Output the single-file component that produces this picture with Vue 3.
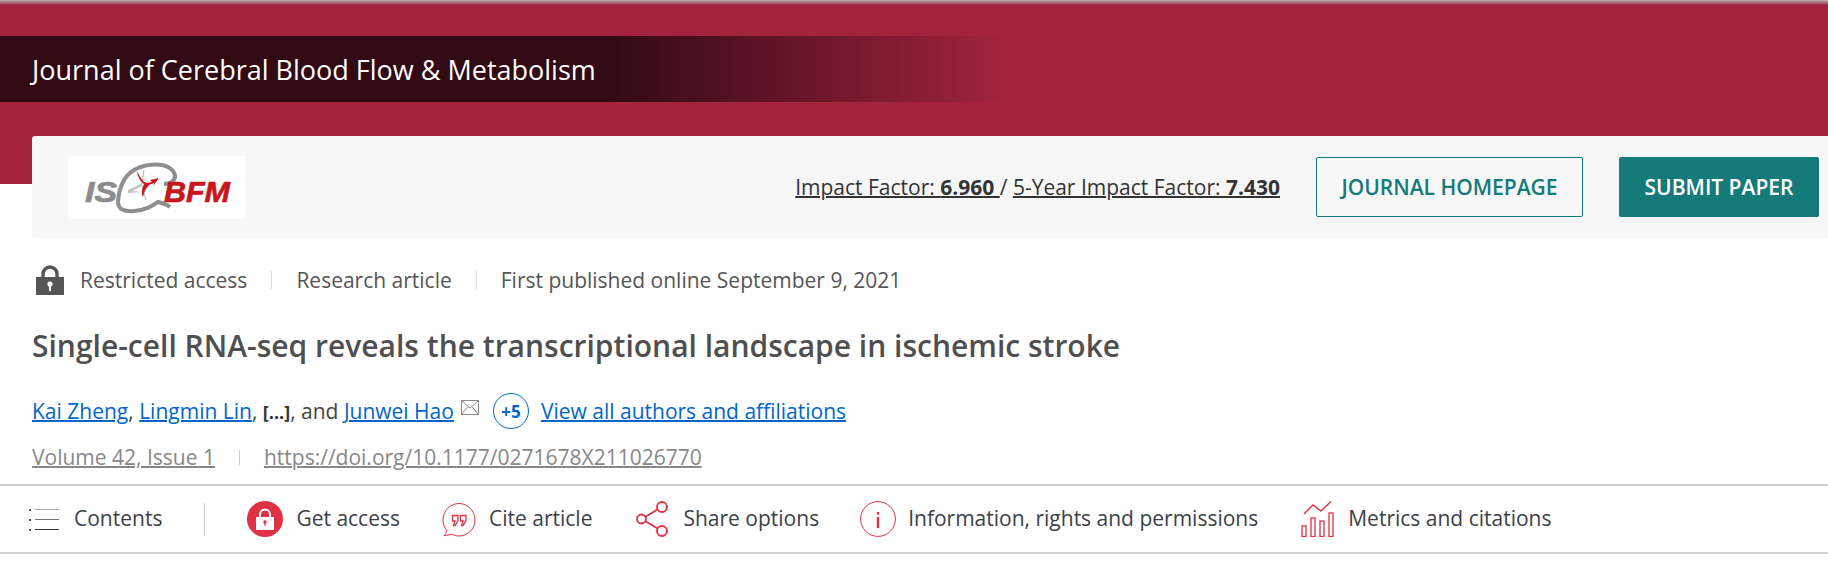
<script setup>
const stats = [
  { label: 'Impact Factor:', value: '6.960 ' },
  { label: '5-Year Impact Factor:', value: '7.430' },
];
</script>

<template>
  <div class="page">
    <header class="masthead">
      <div class="journal-strip">
        <span class="journal-name">Journal of Cerebral Blood Flow &amp; Metabolism</span>
      </div>
      <div class="journal-card">
        <div class="logo">
          <svg width="177" height="63" viewBox="0 0 177 63">
            <text x="17" y="46" textLength="32" lengthAdjust="spacingAndGlyphs" class="logo-text logo-grey">IS</text>
            <path d="M50 46C51 32 56 20 66 14C76 8 92 7 100 11C107 15 109 21 105 25C102 28 99 28 96 28" fill="none" stroke="#8f8f8f" stroke-width="4" />
            <path d="M50 46C50 53 56 56 66 55C78 54 84 50 90 46C94 47 98 48 102 51" fill="none" stroke="#8f8f8f" stroke-width="4" />
            <path d="M60 34L74 27L74 30L64 35L74 36L60 37Z" fill="#c4c4c4" />
            <path d="M76 14L74 28M74 30L78 44" stroke="#b5b5b5" stroke-width="1" fill="none" />
            <path d="M69 15C70 21 72 25 76 28C74 33 73 37 75 41C76 36 78 32 81 29L86 27L85 30L91 22L82 24L84 26C80 27 78 27 76 26C73 23 71 19 69 15Z" fill="#c8161d" />
            <text x="96" y="46" textLength="66" lengthAdjust="spacingAndGlyphs" class="logo-text logo-red">BFM</text>
          </svg>
        </div>
        <div class="impact">
          <template v-for="(s, i) in stats" :key="s.label">
            <span v-if="i > 0">/ </span>
            <span class="impact-link">{{ s.label }} <b>{{ s.value }}</b></span>
          </template>
        </div>
        <a class="btn btn-outline">JOURNAL HOMEPAGE</a>
        <a class="btn btn-solid">SUBMIT PAPER</a>
      </div>
    </header>

    <section class="article">
      <div class="meta">
        <svg class="lock" width="28" height="30" viewBox="0 0 28 30">
          <path d="M7 13V9a7 7 0 0 1 14 0v4" fill="none" stroke="#555" stroke-width="3.4" />
          <rect x="0" y="12" width="28" height="18" fill="#555" />
          <circle cx="14" cy="19" r="2.6" fill="#fff" />
          <rect x="13" y="20" width="2" height="6" fill="#fff" />
        </svg>
        <span>Restricted access</span>
        <i class="meta-sep"></i>
        <span>Research article</span>
        <i class="meta-sep"></i>
        <span>First published online September 9, 2021</span>
      </div>

      <h1 class="title">Single-cell RNA-seq reveals the transcriptional landscape in ischemic stroke</h1>

      <div class="authors">
        <span><a>Kai Zheng</a>, <a>Lingmin Lin</a>, <b class="elided">[...]</b>, and <a>Junwei Hao</a></span>
        <svg class="mail" width="18" height="15" viewBox="0 0 18 15">
          <rect x="0.5" y="0.5" width="17" height="14" fill="none" stroke="#8a8a8a" />
          <path d="M1 1L9 8L17 1M1 14L7 6.5M17 14L11 6.5" fill="none" stroke="#8a8a8a" />
        </svg>
        <span class="more">+5</span>
        <a>View all authors and affiliations</a>
      </div>

      <div class="issue">
        <a>Volume 42, Issue 1</a>
        <i class="issue-sep"></i>
        <a>https://doi.org/10.1177/0271678X211026770</a>
      </div>
    </section>

    <nav class="toolbar">
      <div class="tool tool-contents">
        <svg width="30" height="24" viewBox="0 0 30 24">
          <path d="M0 3h2M0 13h2M0 23h2" stroke="#555" stroke-width="2" />
          <path d="M6 2.500h24" stroke="#aaa" />
          <path d="M6 12.500h24" stroke="#777" />
          <path d="M6 22.500h24" stroke="#333" />
        </svg>
        <span>Contents</span>
      </div>
      <i class="tool-sep"></i>
      <div class="tool">
        <svg width="36" height="36" viewBox="0 0 36 36">
          <circle cx="18" cy="18" r="18" fill="#e03145" />
          <path d="M13 17v-3.500a5 5 0 0 1 10 0V17" fill="none" stroke="#fff" stroke-width="2" />
          <rect x="9" y="16" width="18" height="13" fill="#fff" />
          <circle cx="18" cy="21" r="1.700" fill="#e03145" />
          <rect x="17.400" y="21" width="1.200" height="4" fill="#e03145" />
        </svg>
        <span>Get access</span>
      </div>
      <div class="tool tool-cite">
        <svg width="34" height="36" viewBox="0 0 34 36">
          <path d="M5 29.500C2.400 26.700 1 23 1 19C1 10 8.200 2.500 17 2.500S33 10 33 19S25.800 35 17 35C14.500 35 12.200 34.400 10 33.400L2 34.700C3.500 33.400 4.500 31.600 5 29.500Z" fill="none" stroke="#e03145" />
          <path d="M10.500 14.500h5.500v5l-3 5h-1.500l1.600-4.500h-2.600ZM18.500 14.500h5.500v5l-3 5h-1.500l1.600-4.500h-2.600Z" fill="none" stroke="#e03145" stroke-width="1.300" />
        </svg>
        <span>Cite article</span>
      </div>
      <div class="tool">
        <svg width="34" height="36" viewBox="0 0 34 36">
          <circle cx="5.500" cy="18" r="4.500" fill="none" stroke="#e03145" stroke-width="1.800" />
          <circle cx="26" cy="6" r="5" fill="none" stroke="#e03145" stroke-width="1.800" />
          <circle cx="26" cy="30" r="5" fill="none" stroke="#e03145" stroke-width="1.800" />
          <path d="M9.500 15.700L21.500 8.500M9.500 20.300L21.500 27.500" stroke="#e03145" stroke-width="1.800" />
        </svg>
        <span>Share options</span>
      </div>
      <div class="tool tool-info">
        <svg width="36" height="36" viewBox="0 0 36 36">
          <circle cx="18" cy="18" r="17.400" fill="none" stroke="#e03145" />
          <rect x="16.800" y="11" width="2.400" height="2.600" fill="#e03145" />
          <rect x="16.800" y="16" width="2.400" height="11" fill="#e03145" />
        </svg>
        <span>Information, rights and permissions</span>
      </div>
      <div class="tool">
        <svg width="34" height="36" viewBox="0 0 34 36">
          <path d="M3 13L12 4L20 10L30 0.500" fill="none" stroke="#e03145" stroke-width="1.400" />
          <rect x="1" y="25" width="4" height="10.500" fill="none" stroke="#e03145" stroke-width="1.300" />
          <rect x="10" y="17" width="4" height="18.500" fill="none" stroke="#e03145" stroke-width="1.300" />
          <rect x="19" y="20" width="4" height="15.500" fill="none" stroke="#e03145" stroke-width="1.300" />
          <rect x="28" y="12" width="4" height="23.500" fill="none" stroke="#e03145" stroke-width="1.300" />
        </svg>
        <span>Metrics and citations</span>
      </div>
    </nav>
  </div>
</template>

<style scoped>
.page {
  width: 1828px;
  height: 562px;
  overflow: hidden;
  background: #fff;
  font-family: "Open Sans", "Liberation Sans", sans-serif;
  font-size: 21px;
  color: #444;
}

/* 顶部红色区域 */
.masthead {
  height: 184px;
  padding-top: 36px;
  box-sizing: border-box;
  background: linear-gradient(#b9b3b5 0, #a3233f 5px);
}

.journal-strip {
  width: 1012px;
  height: 66px;
  display: flex;
  align-items: center;
  padding-left: 32px;
  box-sizing: border-box;
  background: linear-gradient(90deg, #310a13 0%, #310a13 60%, #a3233f 100%);
}

.journal-name {
  font-size: 27px;
  color: #fff;
}

.journal-card {
  height: 102px;
  margin: 34px 0 0 32px;
  padding: 20px 9px 0 36px;
  box-sizing: border-box;
  display: flex;
  align-items: flex-start;
  background: #f7f7f7;
  border-radius: 3px 0 0 3px;
}

.logo {
  width: 177px;
  height: 63px;
  background: #fff;
  flex-shrink: 0;
}

.logo svg {
  display: block;
}

.logo-text {
  font-family: "Liberation Sans", sans-serif;
  font-weight: 700;
  font-style: italic;
  font-size: 29px;
  stroke-width: 0.7;
}

.logo-grey {
  fill: #8c8c8c;
  stroke: #8c8c8c;
}

.logo-red {
  fill: #c8161d;
  stroke: #c8161d;
}

.impact {
  margin-left: auto;
  margin-right: 36px;
  line-height: 62px;
  color: #333;
  white-space: pre;
}

.impact-link {
  text-decoration: underline;
  text-decoration-thickness: 2px;
}

.btn {
  height: 60px;
  margin-top: 1px;
  box-sizing: border-box;
  display: flex;
  align-items: center;
  justify-content: center;
  border-radius: 2px;
  font-size: 21px;
  font-weight: 600;
}

.btn-outline {
  width: 267px;
  border: 1px solid #147a7a;
  color: #147a7a;
}

.btn-solid {
  width: 200px;
  margin-left: 36px;
  background: #147a7a;
  color: #fff;
}

/* 文章信息 */
.article {
  padding: 81px 0 0 32px;
}

.meta {
  height: 30px;
  margin-left: 4px;
  display: flex;
  align-items: center;
  color: #555;
}

.lock {
  margin-right: 16px;
}

.meta-sep {
  width: 1px;
  height: 18px;
  margin: 0 24px;
  background: #ddd;
}

.title {
  margin: 31px 0 0;
  font-size: 30px;
  line-height: 40px;
  font-weight: 600;
  color: #4f4f4f;
}

.authors {
  height: 36px;
  margin-top: 27px;
  display: flex;
  align-items: center;
  color: #444;
  white-space: pre;
}

.authors a {
  color: #0066cc;
  text-decoration: underline;
  text-decoration-thickness: 2px;
}

.elided {
  font-size: 18px;
  color: #333;
}

.mail {
  margin: -8px 14px 0 7px;
}

.more {
  width: 36px;
  height: 36px;
  margin-right: 12px;
  box-sizing: border-box;
  display: flex;
  align-items: center;
  justify-content: center;
  border: 1px solid #0066cc;
  border-radius: 50%;
  color: #0066cc;
  font-size: 17px;
  font-weight: 700;
}

.issue {
  margin-top: 14px;
  height: 28px;
  display: flex;
  align-items: center;
  color: #888;
}

.issue a {
  text-decoration: underline;
  text-decoration-thickness: 2px;
}

.issue-sep {
  width: 1px;
  height: 15px;
  margin: 0 24px;
  background: #ccc;
}

/* 底部工具栏 */
.toolbar {
  height: 70px;
  margin-top: 13px;
  padding-left: 29px;
  box-sizing: border-box;
  display: flex;
  align-items: center;
  gap: 43px;
  border-top: 2px solid #d2d2d2;
  border-bottom: 2px solid #d2d2d2;
  color: #3c4148;
}

.tool {
  display: flex;
  align-items: center;
  gap: 13px;
}

.tool svg {
  display: block;
}

.tool span {
  margin-top: -2px;
}

.tool-contents {
  gap: 15px;
}

.tool-cite {
  margin: 0 1px 0 -1px;
}

.tool-info {
  margin-left: -2px;
  gap: 12px;
}

.tool-sep {
  width: 1px;
  height: 33px;
  margin: 0 -1px;
  background: #ccc;
}
</style>
